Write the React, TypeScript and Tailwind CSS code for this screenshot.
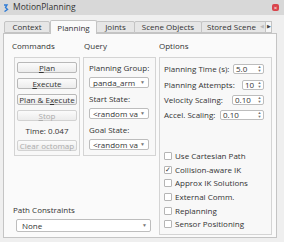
import React from 'react';

const Btn: React.FC<{ children: React.ReactNode; disabled?: boolean }> = ({ children, disabled }) => (
  <div
    className={`h-[11px] rounded-[2px] border border-[#b8b8b8] bg-gradient-to-b from-[#fbfbfb] to-[#ececec] flex items-center justify-center leading-none ${
      disabled ? 'text-[#ababab] border-[#d2d2d2]' : 'text-[#333]'
    }`}
  >
    {children}
  </div>
);

const Combo: React.FC<{ value: string; className?: string }> = ({ value, className }) => (
  <div
    className={`h-[11px] rounded-[2px] border border-[#bdbdbd] bg-white flex items-center pl-[3px] pr-[3px] leading-none overflow-hidden ${className ?? ''}`}
  >
    <span className="flex-1 min-w-0 whitespace-nowrap overflow-hidden">{value}</span>
    <span className="shrink-0 text-[5px] text-[#777] ml-[2px]">▼</span>
  </div>
);

const Spin: React.FC<{ value: string; width: string }> = ({ value, width }) => (
  <div className={`${width} h-[10px] rounded-[2px] border border-[#bdbdbd] bg-white flex items-center justify-between pl-[2px] leading-none`}>
    <span>{value}</span>
    <span className="flex flex-col items-center justify-center w-[7px] text-[4px] leading-[4px] text-[#777]">
      <span>▲</span>
      <span>▼</span>
    </span>
  </div>
);

const Check: React.FC<{ label: string; checked?: boolean }> = ({ label, checked }) => (
  <div className="flex items-center gap-[3px] h-[13.6px]">
    <div className="w-[8px] h-[8px] border border-[#b5b5b5] bg-white rounded-[1px] flex items-center justify-center text-[7px] leading-none text-[#333]">
      {checked ? '✓' : ''}
    </div>
    <span className="leading-none">{label}</span>
  </div>
);

const Tab: React.FC<{ label: string; active?: boolean; w: string }> = ({ label, active, w }) => (
  <div
    className={`${w} flex items-center justify-center border border-[#c4c4c4] rounded-t-[2px] leading-none whitespace-nowrap overflow-hidden ${
      active ? 'h-[14px] bg-[#fafafa] border-b-0 -mb-px z-10' : 'h-[12px] bg-[#e6e6e6] -ml-px'
    }`}
  >
    {label}
  </div>
);

export default function App() {
  return (
    <div className="w-[284px] h-[242px] bg-[#efefef] font-['Open_Sans',sans-serif] text-[8px] text-[#333] overflow-hidden">
      {/* title bar */}
      <div className="h-[15px] bg-[#d8d8d8] flex items-center pl-[3px] pr-[5px]">
        <svg width="6" height="8" viewBox="0 0 6 8">
          <path d="M1 1 L4 1 L2.5 3.5 L4.5 5.5 L1.5 7.5" fill="none" stroke="#2e7bd6" strokeWidth="1.4" />
        </svg>
        <span className="ml-[4px] text-[8.5px] text-[#333]">MotionPlanning</span>
        <div className="ml-auto w-[7px] h-[7px] rounded-[2px] bg-[#d9444b] flex items-center justify-center text-white text-[6px] leading-none">
          ×
        </div>
      </div>

      {/* tabs */}
      <div className="mt-[4px] pl-[5px] h-[14px] flex items-end relative">
        <Tab label="Context" w="w-[46px]" />
        <Tab label="Planning" active w="w-[47px]" />
        <Tab label="Joints" w="w-[39px]" />
        <Tab label="Scene Objects" w="w-[68px]" />
        <div className="w-[58px] h-[12px] -ml-px flex items-center pl-[5px] border border-r-0 border-[#c4c4c4] rounded-tl-[2px] bg-[#e6e6e6] leading-none whitespace-nowrap overflow-hidden">
          Stored Scene
        </div>
        <div className="h-[12px] w-[6px] flex items-center justify-center text-[5px] text-[#bbb] bg-[#e6e6e6] border-y border-[#c4c4c4]">◀</div>
        <div className="h-[12px] w-[7px] flex items-center justify-center text-[5px] text-[#444] bg-[#f6f6f6] border border-[#c4c4c4]">▶</div>
      </div>

      {/* pane */}
      <div className="ml-[3px] w-[274px] h-[205px] border border-[#c4c4c4] bg-[#fafafa] flex pt-[7px] pl-[7px]">
        {/* left column */}
        <div className="w-[145px] flex flex-col">
          <div className="flex">
            <div className="flex flex-col">
              <div className="h-[9px] leading-[9px] pl-[1px]">Commands</div>
              <div className="ml-[3px] mt-[7px] w-[66px] h-[99px] border border-[#d4d4d4] bg-[#f8f8f8] px-[2px] pt-[4px] flex flex-col gap-[5px]">
                <Btn><span className="underline">P</span>lan</Btn>
                <Btn><span className="underline">E</span>xecute</Btn>
                <Btn>Plan &amp; E<span className="underline">x</span>ecute</Btn>
                <Btn disabled><span className="underline">S</span>top</Btn>
                <div className="h-[9px] flex items-center justify-center leading-none">Time: 0.047</div>
                <Btn disabled>Clear octomap</Btn>
              </div>
            </div>
            <div className="flex flex-col ml-[3px]">
              <div className="h-[9px] leading-[9px] pl-[1px]">Query</div>
              <div className="mt-[7px] w-[73px] h-[99px] border border-[#d4d4d4] bg-[#f8f8f8] pl-[5px] pr-[6px] pt-[4px] flex flex-col">
                <div className="h-[11px] leading-[11px] whitespace-nowrap">Planning Group:</div>
                <Combo value="panda_arm" className="mt-[4px]" />
                <div className="h-[11px] leading-[11px] mt-[5px]">Start State:</div>
                <Combo value="<random valid>" className="mt-[4px]" />
                <div className="h-[11px] leading-[11px] mt-[5px]">Goal State:</div>
                <Combo value="<random valid>" className="mt-[4px]" />
              </div>
            </div>
          </div>
          <div className="mt-auto mb-[5px]">
            <div className="pl-[2px] h-[10px] leading-[10px]">Path Constraints</div>
            <Combo value="None" className="ml-[5px] mt-[4px] w-[135px] h-[13px] pl-[5px]" />
          </div>
        </div>

        {/* options */}
        <div className="ml-[3px] flex flex-col">
          <div className="h-[9px] leading-[9px]">Options</div>
          <div className="mt-[7px] w-[113px] h-[178px] border border-[#d4d4d4] bg-[#f8f8f8] pl-[4px] pr-[7px] pt-[5px] flex flex-col">
            <div className="flex items-center justify-between h-[11px]">
              <span className="whitespace-nowrap">Planning Time (s):</span>
              <Spin value="5.0" width="w-[31px]" />
            </div>
            <div className="flex items-center justify-between h-[11px] mt-[5px]">
              <span className="whitespace-nowrap">Planning Attempts:</span>
              <Spin value="10" width="w-[22px]" />
            </div>
            <div className="flex items-center justify-between h-[11px] mt-[4px]">
              <span className="whitespace-nowrap">Velocity Scaling:</span>
              <Spin value="0.10" width="w-[32px]" />
            </div>
            <div className="flex items-center justify-between h-[11px] mt-[4px]">
              <span className="whitespace-nowrap">Accel. Scaling:</span>
              <Spin value="0.10" width="w-[44px]" />
            </div>
            <div className="mt-auto mb-[3px] flex flex-col">
              <Check label="Use Cartesian Path" />
              <Check label="Collision-aware IK" checked />
              <Check label="Approx IK Solutions" />
              <Check label="External Comm." />
              <Check label="Replanning" />
              <Check label="Sensor Positioning" />
            </div>
          </div>
        </div>
      </div>
    </div>
  );
}
